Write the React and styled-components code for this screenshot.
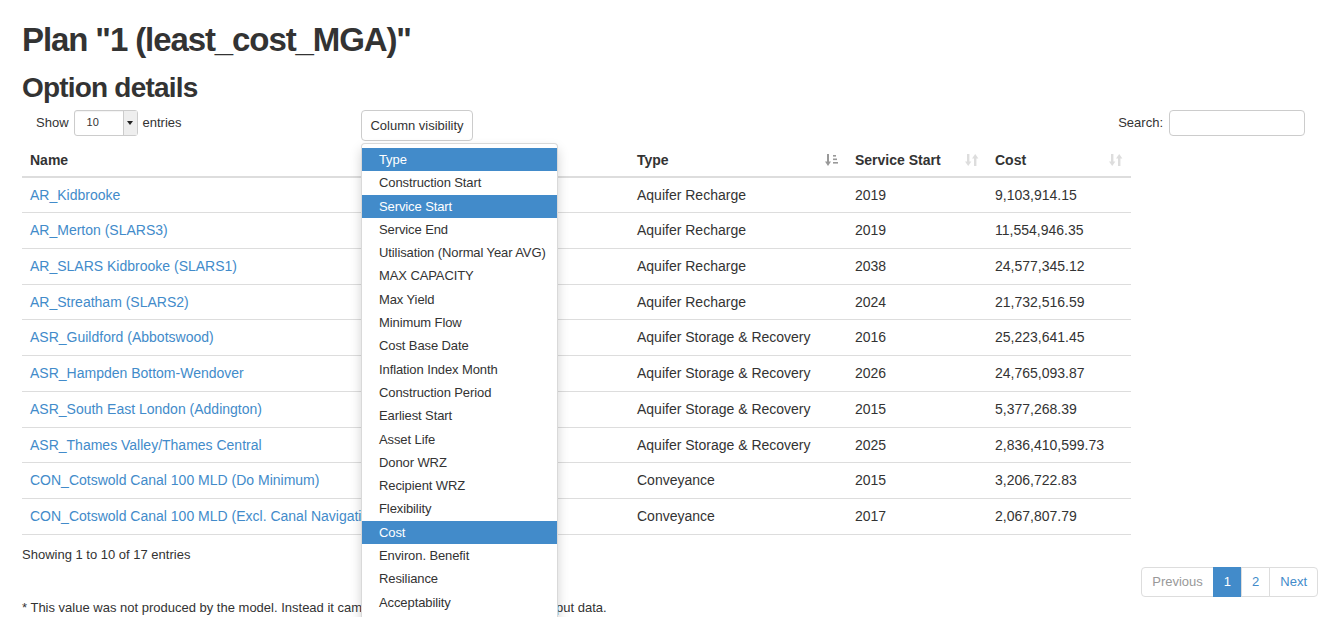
import React from "react";
import styled, { createGlobalStyle } from "styled-components";

const GlobalStyle = createGlobalStyle`
  html, body {
    margin: 0;
    padding: 0;
    overflow: hidden;
    background: #fff;
  }
  body {
    font-family: "Liberation Sans", Arial, Helvetica, sans-serif;
    font-size: 13px;
    line-height: 1.42857;
    color: #333;
  }
  * { box-sizing: border-box; }
`;

const Page = styled.div`
  position: relative;
  padding: 20px 20px 0 22px;
`;

const Title = styled.h1`
  margin: 0 0 11px;
  font-size: 33px;
  line-height: 40px;
  font-weight: bold;
  letter-spacing: -1.1px;
`;

const SubTitle = styled.h2`
  margin: 0 0 6px;
  font-size: 28px;
  line-height: 33px;
  font-weight: bold;
  letter-spacing: -0.8px;
`;

const Controls = styled.div`
  display: flex;
  align-items: flex-start;
  padding: 0 13px 0 14px;
  height: 31px;
`;

const Length = styled.label`
  width: 325px;
  display: flex;
  align-items: center;
  gap: 5px;
  height: 26px;
`;

const FakeSelect = styled.div`
  width: 64px;
  height: 26px;
  border: 1px solid #ccc;
  border-radius: 3px;
  display: flex;
  align-items: center;
  font-size: 11px;
  padding-left: 12px;
  box-shadow: inset 0 1px 1px rgba(0, 0, 0, 0.05);
`;

const SelectArrow = styled.span`
  margin-left: auto;
  width: 14px;
  height: 100%;
  background: #eee;
  border-left: 1px solid #ccc;
  display: flex;
  align-items: center;
  justify-content: center;
  &::after {
    content: "";
    border-left: 3px solid transparent;
    border-right: 3px solid transparent;
    border-top: 4px solid #222;
  }
`;

const VisButton = styled.button`
  font-family: inherit;
  font-size: 13px;
  color: #333;
  background: #fff;
  border: 1px solid #ccc;
  border-radius: 4px;
  height: 31px;
  width: 112px;
  padding: 0;
`;

const Search = styled.label`
  margin-left: auto;
  display: flex;
  align-items: center;
  gap: 6px;
  height: 26px;
`;

const SearchInput = styled.input`
  width: 136px;
  height: 26px;
  border: 1px solid #ccc;
  border-radius: 4px;
  font-family: inherit;
`;

const Table = styled.table`
  width: 1109px;
  border-collapse: collapse;
  font-size: 14px;
`;

const Th = styled.th`
  width: ${(p) => p.w}px;
  text-align: left;
  font-weight: bold;
  padding: 10px 8px 6px 8px;
  border-bottom: 2px solid #ddd;
  line-height: 18.6px;
`;

const HeadInner = styled.div`
  display: flex;
  align-items: center;
  justify-content: space-between;
`;

const Td = styled.td`
  padding: 8px;
  line-height: 18.7px;
  border-bottom: 1px solid #ddd;
  white-space: nowrap;
  overflow: hidden;
`;

const NameLink = styled.a`
  color: #428bca;
  text-decoration: none;
`;

const Footer = styled.div`
  display: flex;
  justify-content: space-between;
  align-items: flex-start;
  margin-top: 10px;
`;

const Info = styled.div`
  line-height: 19px;
`;

const Pager = styled.ul`
  display: flex;
  list-style: none;
  margin: 22px 0 0;
  padding: 0;
`;

const PageItem = styled.li`
  padding: 5px 10px;
  line-height: 18px;
  border: 1px solid ${(p) => (p.active ? "#428bca" : "#ddd")};
  margin-left: -1px;
  background: ${(p) => (p.active ? "#428bca" : "#fff")};
  color: ${(p) => (p.active ? "#fff" : p.disabled ? "#999" : "#428bca")};
  &:first-child { border-radius: 4px 0 0 4px; margin-left: 0; }
  &:last-child { border-radius: 0 4px 4px 0; }
`;

const Note = styled.p`
  margin: 1px 0 0;
  line-height: 19px;
`;

const Dropdown = styled.ul`
  position: absolute;
  top: 143px;
  left: 361px;
  width: 197px;
  margin: 0;
  padding: 4px 0;
  list-style: none;
  background: #fff;
  border: 1px solid rgba(0, 0, 0, 0.15);
  border-radius: 4px;
  box-shadow: 0 6px 12px rgba(0, 0, 0, 0.175);
  z-index: 10;
`;

const DropItem = styled.li`
  padding: 3px 17px;
  line-height: 17.3px;
  white-space: nowrap;
  letter-spacing: -0.1px;
  background: ${(p) => (p.active ? "#428bca" : "transparent")};
  color: ${(p) => (p.active ? "#fff" : "#333")};
`;

const SortIcon = ({ active }) =>
  active ? (
    <svg width="14" height="14" viewBox="0 0 14 14">
      <g fill="#999">
        <rect x="2" y="1" width="2" height="8" />
        <polygon points="0,8.5 6,8.5 3,13" />
        <rect x="8" y="2" width="3" height="1.6" />
        <rect x="8" y="5.5" width="4" height="1.6" />
        <rect x="8" y="9" width="5" height="1.6" />
      </g>
    </svg>
  ) : (
    <svg width="14" height="14" viewBox="0 0 14 14">
      <g fill="#ddd">
        <rect x="2" y="1" width="2.4" height="8" />
        <polygon points="0,8.5 6.4,8.5 3.2,13" />
        <rect x="9" y="5" width="2.4" height="8" />
        <polygon points="7,5.5 13.4,5.5 10.2,1" />
      </g>
    </svg>
  );

const rows = [
  ["AR_Kidbrooke", "Aquifer Recharge", "2019", "9,103,914.15"],
  ["AR_Merton (SLARS3)", "Aquifer Recharge", "2019", "11,554,946.35"],
  ["AR_SLARS Kidbrooke (SLARS1)", "Aquifer Recharge", "2038", "24,577,345.12"],
  ["AR_Streatham (SLARS2)", "Aquifer Recharge", "2024", "21,732,516.59"],
  ["ASR_Guildford (Abbotswood)", "Aquifer Storage & Recovery", "2016", "25,223,641.45"],
  ["ASR_Hampden Bottom-Wendover", "Aquifer Storage & Recovery", "2026", "24,765,093.87"],
  ["ASR_South East London (Addington)", "Aquifer Storage & Recovery", "2015", "5,377,268.39"],
  ["ASR_Thames Valley/Thames Central", "Aquifer Storage & Recovery", "2025", "2,836,410,599.73"],
  ["CON_Cotswold Canal 100 MLD (Do Minimum)", "Conveyance", "2015", "3,206,722.83"],
  ["CON_Cotswold Canal 100 MLD (Excl. Canal Navigation)", "Conveyance", "2017", "2,067,807.79"],
];

const columns = [
  ["Type", true],
  ["Construction Start"],
  ["Service Start", true],
  ["Service End"],
  ["Utilisation (Normal Year AVG)"],
  ["MAX CAPACITY"],
  ["Max Yield"],
  ["Minimum Flow"],
  ["Cost Base Date"],
  ["Inflation Index Month"],
  ["Construction Period"],
  ["Earliest Start"],
  ["Asset Life"],
  ["Donor WRZ"],
  ["Recipient WRZ"],
  ["Flexibility"],
  ["Cost", true],
  ["Environ. Benefit"],
  ["Resiliance"],
  ["Acceptability"],
  ["Sustainability"],
  ["Deliverability"],
];

export default function App() {
  return (
    <Page>
      <GlobalStyle />
      <Title>Plan "1 (least_cost_MGA)"</Title>
      <SubTitle>Option details</SubTitle>
      <Controls>
        <Length>
          Show
          <FakeSelect>
            10
            <SelectArrow />
          </FakeSelect>
          entries
        </Length>
        <VisButton>Column visibility</VisButton>
        <Search>
          Search:
          <SearchInput type="search" />
        </Search>
      </Controls>
      <Table>
        <thead>
          <tr>
            <Th w={607}>Name</Th>
            <Th w={218}>
              <HeadInner>
                Type <SortIcon active />
              </HeadInner>
            </Th>
            <Th w={140}>
              <HeadInner>
                Service Start <SortIcon />
              </HeadInner>
            </Th>
            <Th w={144}>
              <HeadInner>
                Cost <SortIcon />
              </HeadInner>
            </Th>
          </tr>
        </thead>
        <tbody>
          {rows.map((r) => (
            <tr key={r[0]}>
              <Td>
                <NameLink href="#">{r[0]}</NameLink>
              </Td>
              <Td>{r[1]}</Td>
              <Td>{r[2]}</Td>
              <Td>{r[3]}</Td>
            </tr>
          ))}
        </tbody>
      </Table>
      <Footer>
        <Info>Showing 1 to 10 of 17 entries</Info>
        <Pager>
          <PageItem disabled>Previous</PageItem>
          <PageItem active>1</PageItem>
          <PageItem>2</PageItem>
          <PageItem>Next</PageItem>
        </Pager>
      </Footer>
      <Note>
        * This value was not produced by the model. Instead it came directly from the user's option input data.
      </Note>
      <Dropdown>
        {columns.map(([label, active]) => (
          <DropItem key={label} active={active}>
            {label}
          </DropItem>
        ))}
      </Dropdown>
    </Page>
  );
}
